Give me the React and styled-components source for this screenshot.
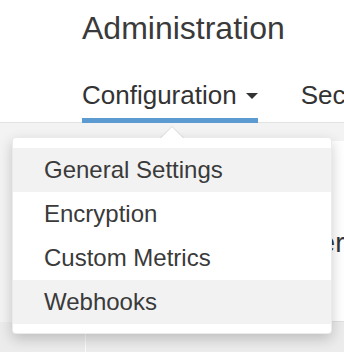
import React from 'react'
import styled, { createGlobalStyle } from 'styled-components'

const GlobalStyle = createGlobalStyle`
  html, body {
    margin: 0;
    padding: 0;
    background: #fff;
  }
  body {
    font-family: "Liberation Sans", Arial, Helvetica, sans-serif;
    color: #333;
    overflow: hidden;
  }
`

const Page = styled.div`
  width: 344px;
  height: 352px;
  overflow: hidden;
  display: flex;
  flex-direction: column;
`

const Header = styled.div`
  padding: 12px 0 0 82px;
  background: #fff;
  border-bottom: 1px solid #e2e2e2;
`

const Title = styled.h1`
  margin: 0;
  font-size: 32px;
  line-height: 32px;
  font-weight: 400;
  color: #3a3a3a;
  white-space: nowrap;
`

const Tabs = styled.div`
  margin-top: 36px;
  display: flex;
  gap: 43px;
  white-space: nowrap;
`

const Tab = styled.div`
  position: relative;
  font-size: 26px;
  line-height: 30px;
  padding-bottom: 8px;
  color: #333;
  display: flex;
  align-items: center;
  border-bottom: 5px solid ${p => (p.active ? '#5b9bd1' : 'transparent')};
  margin-bottom: -1px;
`

const Caret = styled.span`
  display: inline-block;
  width: 0;
  height: 0;
  margin-left: 9px;
  margin-top: 2px;
  border-left: 6px solid transparent;
  border-right: 6px solid transparent;
  border-top: 6px solid #333;
`

const Content = styled.div`
  flex: 1;
  background: #f3f3f3;
  display: flex;
  flex-direction: column;
  padding-top: 18px;
`

const Card = styled.div`
  height: 181px;
  background: #fff;
  margin-left: 12px;
  padding: 86px 0 0 250px;
  box-sizing: border-box;
  border-bottom: 1px solid #e0e0e0;
`

const CardTitle = styled.div`
  font-size: 28px;
  line-height: 32px;
  color: #333;
  white-space: nowrap;
`

const Rows = styled.div`
  flex: 1;
  display: flex;
`

const Cell = styled.div`
  width: ${p => p.w || 'auto'};
  flex: ${p => (p.w ? 'none' : 1)};
  border-right: ${p => (p.w ? '1px solid #fbfbfb' : 'none')};
  background: #ececec;
`

const Menu = styled.div`
  position: absolute;
  top: 57px;
  left: -70px;
  width: 320px;
  box-sizing: border-box;
  padding: 10px 0 9px;
  background: #fff;
  border: 1px solid rgba(0, 0, 0, 0.08);
  border-radius: 4px;
  box-shadow: 0 5px 14px rgba(0, 0, 0, 0.2);
  z-index: 10;

  &::before,
  &::after {
    content: '';
    position: absolute;
    width: 0;
    height: 0;
    border-style: solid;
    border-color: transparent;
  }
  &::before {
    top: -12px;
    left: 147px;
    border-width: 0 12px 12px 12px;
    border-bottom-color: rgba(0, 0, 0, 0.1);
  }
  &::after {
    top: -11px;
    left: 148px;
    border-width: 0 11px 11px 11px;
    border-bottom-color: #fff;
  }
`

const MenuItem = styled.div`
  height: 44px;
  line-height: 44px;
  padding-left: 31px;
  font-size: 24px;
  color: #3a3a3a;
  background: ${p => (p.hl ? '#f2f2f2' : '#fff')};
  white-space: nowrap;
`

const items = [
  { label: 'General Settings', hl: true },
  { label: 'Encryption' },
  { label: 'Custom Metrics' },
  { label: 'Webhooks', hl: true }
]

export default function App () {
  return (
    <Page>
      <GlobalStyle />
      <Header>
        <Title>Administration</Title>
        <Tabs>
          <Tab active>
            Configuration<Caret />
            <Menu>
              {items.map(it => (
                <MenuItem key={it.label} hl={it.hl}>{it.label}</MenuItem>
              ))}
            </Menu>
          </Tab>
          <Tab>Security</Tab>
        </Tabs>
      </Header>
      <Content>
        <Card>
          <CardTitle>Server</CardTitle>
        </Card>
        <Rows>
          <Cell w='85px' />
          <Cell />
        </Rows>
      </Content>
    </Page>
  )
}
